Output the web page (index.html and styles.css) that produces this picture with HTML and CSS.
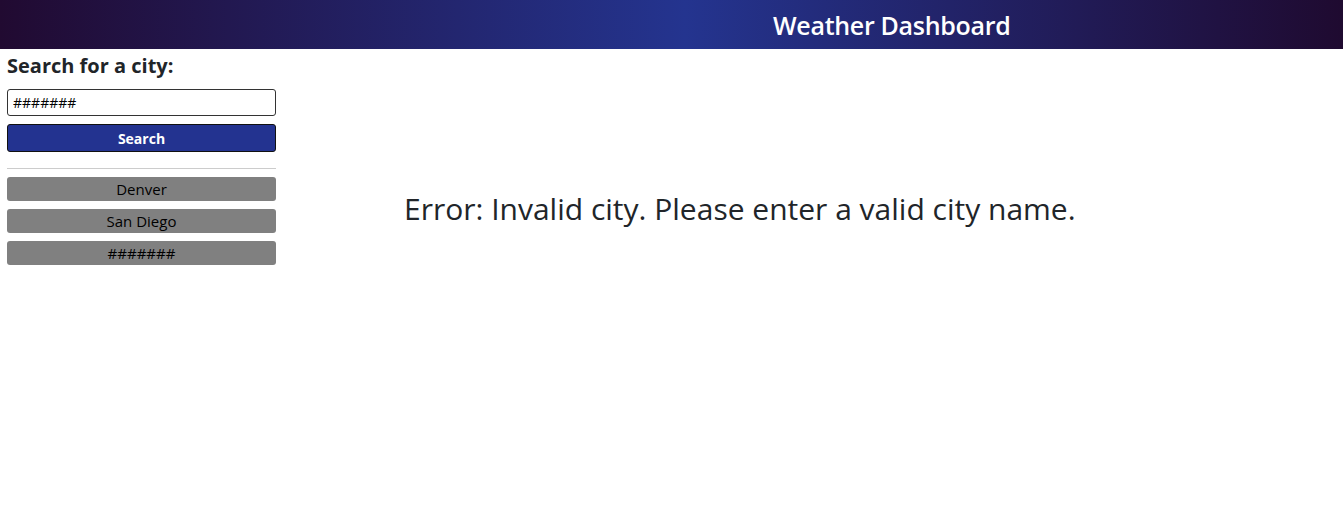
FILE: index.html
```html
<!DOCTYPE html>
<html lang="en">
<head>
<meta charset="utf-8">
<title>Weather Dashboard</title>
<link rel="stylesheet" href="styles.css">
</head>
<body>
<header class="topbar">
  <div class="topbar-spacer"></div>
  <h1 class="topbar-title">Weather Dashboard</h1>
</header>
<div class="layout">
  <aside class="sidebar">
    <h2 class="sidebar-heading">Search for a city:</h2>
    <input class="city-input" type="text" value="#######">
    <button class="search-btn">Search</button>
    <hr class="divider">
    <div class="history">
      <button class="history-btn">Denver</button>
      <button class="history-btn">San Diego</button>
      <button class="history-btn">#######</button>
    </div>
  </aside>
  <main class="content">
    <p class="error-msg">Error: Invalid city. Please enter a valid city name.</p>
  </main>
</div>
</body>
</html>
```
FILE: styles.css
```css
* { box-sizing: border-box; }
body {
  margin: 0;
  font-family: "Open Sans", "Noto Sans", sans-serif;
  color: #212529;
  background: #fff;
}
.topbar {
  height: 49px;
  display: flex;
  align-items: center;
  background: linear-gradient(90deg, #210a31 0%, #24348f 51%, #1f0a30 100%);
}
.topbar-spacer { width: 773px; }
.topbar-title {
  margin: 0;
  color: #fff;
  font-size: 25px;
  font-weight: 600;
  letter-spacing: -0.3px;
}
.layout { display: flex; }
.sidebar {
  width: 283px;
  padding: 5px 7px 0 7px;
  display: flex;
  flex-direction: column;
}
.sidebar-heading {
  margin: 0 0 11px 0;
  font-size: 20px;
  font-weight: 700;
  line-height: 24px;
}
.city-input {
  width: 100%;
  height: 27px;
  border: 1px solid #333;
  border-radius: 3px;
  padding: 0 5px;
  font-family: inherit;
  font-size: 14px;
  color: #000;
}
.search-btn {
  margin-top: 8px;
  width: 100%;
  height: 28px;
  background: #233390;
  color: #fff;
  border: 1px solid #111;
  border-radius: 3px;
  font-family: inherit;
  font-size: 14px;
  font-weight: 700;
}
.divider {
  width: 100%;
  margin: 16px 0 8px 0;
  border: 0;
  border-top: 1px solid #ccc;
}
.history { display: flex; flex-direction: column; gap: 8px; }
.history-btn {
  height: 24px;
  background: #808080;
  border: 0;
  border-radius: 3px;
  font-family: inherit;
  font-size: 15px;
  color: #000;
}
.content { flex: 1; padding-left: 121px; }
.error-msg {
  margin: 140px 0 0 0;
  font-size: 30px;
  font-weight: 400;
  line-height: 40px;
}
```
